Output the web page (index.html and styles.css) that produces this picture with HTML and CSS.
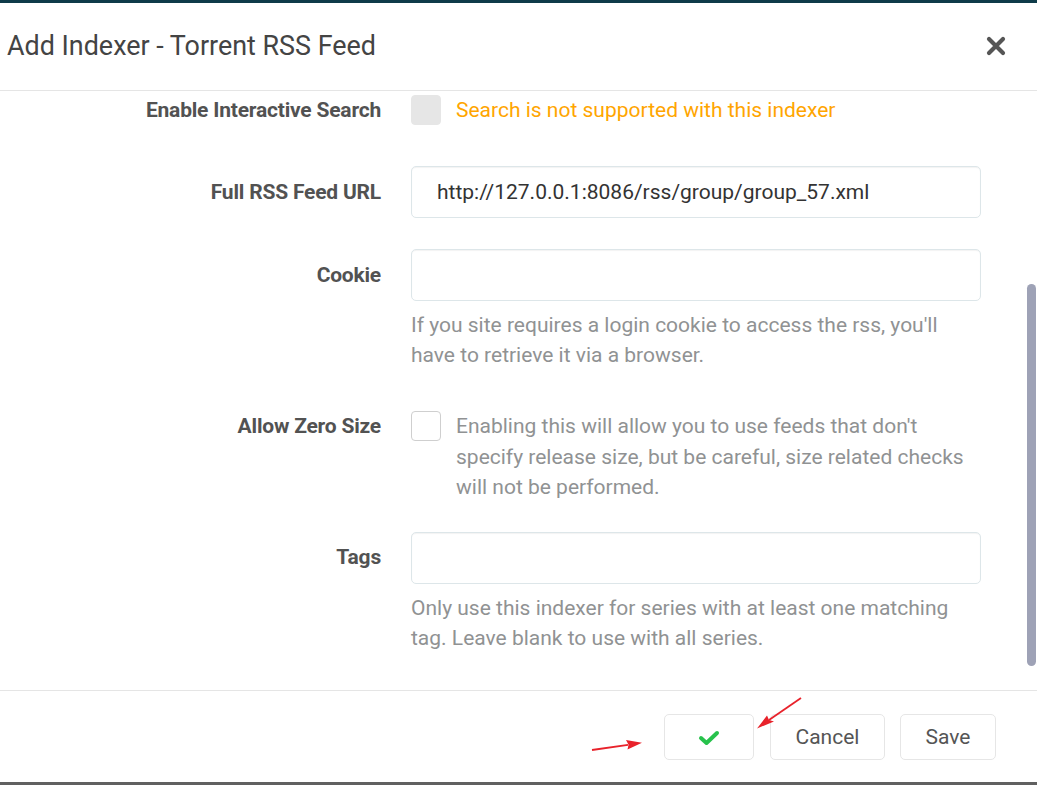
FILE: index.html
```html
<!DOCTYPE html>
<html>
<head>
<meta charset="utf-8">
<link rel="stylesheet" href="styles.css">
</head>
<body>
<div class="page">
  <div class="topbar"></div>
  <header class="modal-header">
    <h1 class="title">Add Indexer - Torrent RSS Feed</h1>
    <button class="close" aria-label="Close">
      <svg width="20" height="20" viewBox="0 0 20 20"><path d="M3 3 L17 17 M17 3 L3 17" stroke="#555" stroke-width="4.2" stroke-linecap="round"/></svg>
    </button>
  </header>
  <main class="modal-body">
    <div class="row row-first">
      <div class="label label-check">Enable Interactive Search</div>
      <div class="control check-line">
        <span class="checkbox disabled"></span>
        <span class="warning">Search is not supported with this indexer</span>
      </div>
    </div>
    <div class="row">
      <div class="label label-input">Full RSS Feed URL</div>
      <div class="control">
        <div class="input">http://127.0.0.1:8086/rss/group/group_57.xml</div>
      </div>
    </div>
    <div class="row row-help">
      <div class="label label-input">Cookie</div>
      <div class="control">
        <div class="input"></div>
        <p class="help">If you site requires a login cookie to access the rss, you'll have to retrieve it via a browser.</p>
      </div>
    </div>
    <div class="row row-zero">
      <div class="label label-check">Allow Zero Size</div>
      <div class="control check-line">
        <span class="checkbox"></span>
        <span class="check-text">Enabling this will allow you to use feeds that don't specify release size, but be careful, size related checks will not be performed.</span>
      </div>
    </div>
    <div class="row">
      <div class="label label-input">Tags</div>
      <div class="control">
        <div class="input"></div>
        <p class="help">Only use this indexer for series with at least one matching tag. Leave blank to use with all series.</p>
      </div>
    </div>
    <div class="scroll-thumb"></div>
  </main>
  <footer class="modal-footer">
    <button class="btn btn-test">
      <svg width="22" height="16" viewBox="0 0 22 16"><path d="M3 8 L8.5 13 L19 3" fill="none" stroke="#27c24c" stroke-width="4" stroke-linecap="round" stroke-linejoin="round"/></svg>
    </button>
    <button class="btn btn-cancel">Cancel</button>
    <button class="btn btn-save">Save</button>
    <svg class="arrows" width="1037" height="92" viewBox="0 0 1037 92">
      <path d="M592 59 L628 53.8" stroke="#e8222b" stroke-width="1.8" fill="none"/>
      <path d="M642 51.8 L626 49 L628.5 53.8 L627.5 58.4 Z" fill="#e8222b"/>
      <path d="M801 7 L769 29" stroke="#e8222b" stroke-width="1.8" fill="none"/>
      <path d="M757 37.5 L767 24.5 L769 29 L774 30.5 Z" fill="#e8222b"/>
    </svg>
  </footer>
  <div class="bottombar"></div>
</div>
</body>
</html>
```

FILE: styles.css
```css
*, *::before, *::after {
  box-sizing: border-box;
}
html, body {
  margin: 0;
  padding: 0;
  background: #fff;
}
body {
  font-family: Roboto, "Liberation Sans", sans-serif;
  color: #555;
}
.page {
  width: 1037px;
  height: 785px;
  display: flex;
  flex-direction: column;
  overflow: hidden;
}
.topbar {
  flex: 0 0 3px;
  background: #0f3b49;
}
.modal-header {
  flex: 0 0 88px;
  border-bottom: 1px solid #e5e5e5;
  display: flex;
  align-items: center;
  justify-content: space-between;
  padding: 0 31px 0 7px;
}
.title {
  margin: 0;
  font-size: 26.9px;
  font-weight: 400;
  color: #444;
  line-height: 1;
  padding-bottom: 1px;
}
.close {
  border: 0;
  background: none;
  padding: 0;
  width: 20px;
  height: 20px;
  margin-bottom: 1px;
}
.close svg { display: block; }
.modal-body {
  flex: 0 0 599px;
  position: relative;
  padding-top: 4px;
  overflow: hidden;
}
.row {
  display: flex;
  gap: 30px;
  margin-bottom: 31px;
}
.row-first {
  min-height: 40px;
}
.row-help { margin-bottom: 41px; }
.row-zero { margin-bottom: 29px; }
.label {
  flex: 0 0 381px;
  display: flex;
  align-items: center;
  justify-content: flex-end;
  font-size: 21px;
  font-weight: 700;
  color: #525252;
  letter-spacing: -0.2px;
}
.label-input { height: 51px; }
.label-check { height: 30px; }
.control {
  flex: 0 0 570px;
}
.check-line {
  display: flex;
  align-items: flex-start;
  gap: 15px;
}
.checkbox {
  flex: 0 0 30px;
  width: 30px;
  height: 30px;
  border: 1px solid #cfcfcf;
  border-radius: 4px;
  background: #fff;
}
.checkbox.disabled {
  background: #e6e6e6;
  border-color: #e6e6e6;
}
.warning {
  color: #ffa500;
  font-size: 21px;
  line-height: 30px;
}
.check-text {
  color: #909293;
  font-size: 21px;
  line-height: 30.5px;
  padding-right: 10px;
}
.input {
  height: 52px;
  border: 1px solid #dde6e9;
  border-radius: 5px;
  box-shadow: inset 0 1px 1px rgba(0,0,0,0.05);
  padding: 0 25px;
  display: flex;
  align-items: center;
  font-size: 21px;
  color: #333;
}
.help {
  margin: 9px 0 0;
  color: #909293;
  font-size: 21px;
  line-height: 30px;
  padding-right: 20px;
}
.scroll-thumb {
  position: absolute;
  right: 1px;
  top: 193px;
  width: 9px;
  height: 382px;
  border-radius: 5px;
  background: #9ea2b6;
}
.modal-footer {
  flex: 0 0 92px;
  border-top: 1px solid #e5e5e5;
  position: relative;
  display: flex;
  align-items: flex-start;
  justify-content: flex-end;
  padding: 23px 41px 0 0;
  gap: 15px;
}
.btn {
  height: 46px;
  border: 1px solid #e6e6e6;
  border-radius: 5px;
  background: #fff;
  font-family: Roboto, "Liberation Sans", sans-serif;
  font-size: 21px;
  color: #555;
  padding: 0;
  display: flex;
  align-items: center;
  justify-content: center;
}
.btn-test { width: 90px; margin-right: 1px; }
.btn-test svg { display: block; margin-top: 1px; }
.btn-cancel { width: 115px; }
.btn-save { width: 96px; }
.arrows {
  position: absolute;
  left: 0;
  top: 0;
  pointer-events: none;
}
.bottombar {
  flex: 0 0 3px;
  background: #606060;
}
```
